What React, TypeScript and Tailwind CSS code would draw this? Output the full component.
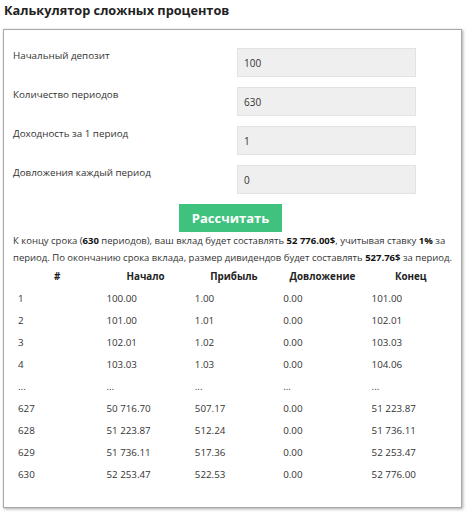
import React from "react";

const rows: string[][] = [
  ["1", "100.00", "1.00", "0.00", "101.00"],
  ["2", "101.00", "1.01", "0.00", "102.01"],
  ["3", "102.01", "1.02", "0.00", "103.03"],
  ["4", "103.03", "1.03", "0.00", "104.06"],
  ["...", "...", "...", "...", "..."],
  ["627", "50 716.70", "507.17", "0.00", "51 223.87"],
  ["628", "51 223.87", "512.24", "0.00", "51 736.11"],
  ["629", "51 736.11", "517.36", "0.00", "52 253.47"],
  ["630", "52 253.47", "522.53", "0.00", "52 776.00"],
];

const fields = [
  ["Начальный депозит", "100"],
  ["Количество периодов", "630"],
  ["Доходность за 1 период", "1"],
  ["Довложения каждый период", "0"],
];

export default function App() {
  return (
    <div
      className="w-[474px] h-[513px] bg-white text-[#333] overflow-hidden"
      style={{ fontFamily: '"Open Sans", "Noto Sans", sans-serif' }}
    >
      <h1 className="pl-[4px] pt-[1px] text-[12.75px] leading-[18px] font-bold text-[#222]">
        Калькулятор сложных процентов
      </h1>
      <div className="ml-[3px] mt-[10px] w-[459px] h-[479px] border border-[#a8a8a8] shadow-[1px_1px_3px_rgba(0,0,0,0.35)] pl-[9px] pr-[6px] pt-[18px]">
        <div className="flex flex-col gap-[10px]">
          {fields.map(([label, value]) => (
            <div key={label} className="flex items-start">
              <div className="w-[224px] text-[9.8px] leading-[16px]">{label}</div>
              <div className="w-[179px] h-[29px] bg-[#efefef] border border-[#e2e2e2] flex items-center pl-[6px] pt-[1px] text-[10px]">
                {value}
              </div>
            </div>
          ))}
        </div>
        <div className="flex justify-center mt-[10px] pr-[7px]">
          <button className="w-[103px] h-[28px] bg-[#3fc27e] text-white font-bold text-[13px] leading-[28px]">
            Рассчитать
          </button>
        </div>
        <p className="text-[9.5px] leading-[17px] whitespace-nowrap">
          К концу срока (<b className="text-[#111]">630</b> периодов), ваш вклад будет составлять{" "}
          <b className="text-[#111]">52 776.00$</b>, учитывая ставку <b className="text-[#111]">1%</b> за
          <br />
          период. По окончанию срока вклада, размер дивидендов будет составлять{" "}
          <b className="text-[#111]">527.76$</b> за период.
        </p>
        <table className="w-[442px] text-[9.8px] table-fixed">
          <thead>
            <tr className="h-[22px]">
              {["#", "Начало", "Прибыль", "Довложение", "Конец"].map((h) => (
                <th key={h} className="font-bold text-center text-[#222]">
                  {h}
                </th>
              ))}
            </tr>
          </thead>
          <tbody>
            {rows.map((r, i) => (
              <tr key={i} className="h-[22px]">
                {r.map((c, j) => (
                  <td key={j} className="pl-[5px] text-left">
                    {c}
                  </td>
                ))}
              </tr>
            ))}
          </tbody>
        </table>
      </div>
    </div>
  );
}
